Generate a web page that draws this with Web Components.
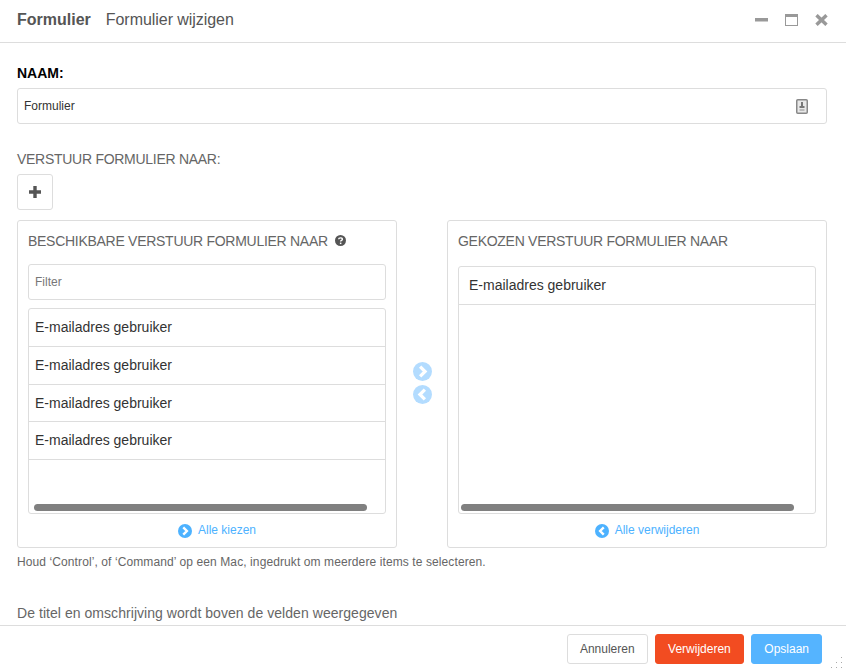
<!DOCTYPE html>
<html>
<head>
<meta charset="utf-8">
<title>Formulier</title>
<style>
  html, body { margin: 0; height: 100%; background: #fff; }
  body { font-family: "Liberation Sans", Arial, sans-serif; color: #555; }
</style>
</head>
<body>
<form-dialog>
  <span slot="title">Formulier</span>
  <span slot="subtitle">Formulier wijzigen</span>

  <name-field label="NAAM:" value="Formulier"></name-field>
  <section-label>VERSTUUR FORMULIER NAAR:</section-label>
  <add-button></add-button>

  <dual-list>
    <list-panel slot="left" heading="BESCHIKBARE VERSTUUR FORMULIER NAAR" help filter action="Alle kiezen" dir="right">
      <list-row>E-mailadres gebruiker</list-row>
      <list-row>E-mailadres gebruiker</list-row>
      <list-row>E-mailadres gebruiker</list-row>
      <list-row>E-mailadres gebruiker</list-row>
    </list-panel>
    <list-panel slot="right" heading="GEKOZEN VERSTUUR FORMULIER NAAR" action="Alle verwijderen" dir="left">
      <list-row indent>E-mailadres gebruiker</list-row>
    </list-panel>
  </dual-list>

  <hint-text>Houd ‘Control’, of ‘Command’ op een Mac, ingedrukt om meerdere items te selecteren.</hint-text>
  <note-text>De titel en omschrijving wordt boven de velden weergegeven</note-text>

  <dialog-button slot="footer">Annuleren</dialog-button>
  <dialog-button slot="footer" kind="danger">Verwijderen</dialog-button>
  <dialog-button slot="footer" kind="primary">Opslaan</dialog-button>
</form-dialog>

<script>
const circleArrow = (dir, size, color) => `
  <svg width="${size}" height="${size}" viewBox="0 0 20 20" style="display:block">
    <circle cx="10" cy="10" r="10" fill="${color}"/>
    <path d="${dir === 'right' ? 'M7.5 4.8 L12.7 10 L7.5 15.2' : 'M12.5 4.8 L7.3 10 L12.5 15.2'}" fill="none" stroke="#fff" stroke-width="3.4"/>
  </svg>`;

class FormDialog extends HTMLElement {
  constructor() {
    super();
    this.attachShadow({ mode: 'open' }).innerHTML = `
      <style>
        :host { display: flex; flex-direction: column; height: 671px; width: 846px; overflow: hidden; background: #fff; }
        header { flex: none; box-sizing: border-box; height: 43px; border-bottom: 1px solid #ddd; display: flex; align-items: center; padding: 0 18px 3px 17px; font-size: 16px; color: #555; }
        .title { font-weight: 700; margin-right: 15px; }
        .sub { letter-spacing: -0.05px; }
        .controls { margin-left: auto; display: flex; align-items: center; gap: 17px; }
        .controls svg { display: block; }
        main { flex: 1; min-height: 0; overflow: hidden; padding: 0 19px 0 17px; }
        footer { flex: none; box-sizing: border-box; height: 46px; border-top: 1px solid #ddd; display: flex; justify-content: flex-end; align-items: flex-start; gap: 7px; padding: 8px 24px 0 0; position: relative; }
        .grip { position: absolute; right: 3px; bottom: 3px; }
      </style>
      <header>
        <span class="title"><slot name="title"></slot></span>
        <span class="sub"><slot name="subtitle"></slot></span>
        <div class="controls">
          <svg width="13" height="12" viewBox="0 0 13 12"><rect x="0" y="4" width="13" height="3.5" fill="#999"/></svg>
          <svg width="13" height="12" viewBox="0 0 13 12"><rect x=".5" y=".5" width="12" height="11" fill="none" stroke="#999"/><rect x="0" y="0" width="13" height="3" fill="#999"/></svg>
          <svg width="13" height="12" viewBox="0 0 13 12"><path d="M1.5 1.2 L11.5 10.8 M11.5 1.2 L1.5 10.8" stroke="#999" stroke-width="3.4" fill="none"/></svg>
        </div>
      </header>
      <main><slot></slot></main>
      <footer>
        <slot name="footer"></slot>
        <svg class="grip" width="12" height="12" viewBox="0 0 12 12" fill="#aaa">
          <rect x="10" y="1" width="1" height="1"/><rect x="5" y="6" width="1" height="1"/><rect x="10" y="6" width="1" height="1"/>
          <rect x="0" y="11" width="1" height="1"/><rect x="5" y="11" width="1" height="1"/><rect x="10" y="11" width="1" height="1"/>
        </svg>
      </footer>`;
  }
}

class NameField extends HTMLElement {
  constructor() {
    super();
    this.attachShadow({ mode: 'open' }).innerHTML = `
      <style>
        :host { display: block; padding-top: 22px; }
        .label { font-size: 14px; line-height: 16px; font-weight: 700; color: #000; margin-bottom: 7px; }
        .box { height: 34px; border: 1px solid #ddd; border-radius: 3px; display: flex; align-items: center; padding: 0 18px 0 6px; font-size: 12px; color: #333; }
        svg { margin-left: auto; display: block; }
      </style>
      <div class="label">${this.getAttribute('label')}</div>
      <div class="box">
        <span>${this.getAttribute('value')}</span>
        <svg width="12" height="15" viewBox="0 0 12 15">
          <rect x=".75" y=".75" width="10.5" height="13.5" rx="1" fill="#e8e8e8" stroke="#888" stroke-width="1.5"/>
          <rect x="5" y="3" width="2" height="4" fill="#777"/>
          <rect x="3.5" y="7" width="5" height="2" fill="#777"/>
          <rect x="3.5" y="10" width="5" height="2" fill="#bbb"/>
        </svg>
      </div>`;
  }
}

class SectionLabel extends HTMLElement {
  constructor() {
    super();
    this.attachShadow({ mode: 'open' }).innerHTML = `
      <style>:host { display: block; font-size: 14px; line-height: 16px; letter-spacing: -0.28px; color: #666; margin-top: 27px; margin-bottom: 7px; }</style>
      <slot></slot>`;
  }
}

class AddButton extends HTMLElement {
  constructor() {
    super();
    this.attachShadow({ mode: 'open' }).innerHTML = `
      <style>
        :host { display: flex; width: 34px; height: 34px; border: 1px solid #ddd; border-radius: 3px; align-items: center; justify-content: center; margin-bottom: 10px; }
        svg { display: block; }
      </style>
      <svg width="12" height="12" viewBox="0 0 12 12"><path d="M4.3 0h3.4v4.3H12v3.4H7.7V12H4.3V7.7H0V4.3h4.3z" fill="#555"/></svg>`;
  }
}

class DualList extends HTMLElement {
  constructor() {
    super();
    this.attachShadow({ mode: 'open' }).innerHTML = `
      <style>
        :host { display: flex; height: 328px; }
        .mid { width: 50px; flex: none; display: flex; flex-direction: column; align-items: center; justify-content: center; gap: 4px; padding-bottom: 3px; box-sizing: border-box; }
      </style>
      <slot name="left"></slot>
      <div class="mid">${circleArrow('right', 19, '#b3dcff')}${circleArrow('left', 19, '#b3dcff')}</div>
      <slot name="right"></slot>`;
  }
}

class ListPanel extends HTMLElement {
  constructor() {
    super();
    const hasFilter = this.hasAttribute('filter');
    const help = this.hasAttribute('help') ? `
      <svg class="help" width="11" height="11" viewBox="0 0 11 11">
        <circle cx="5.5" cy="5.5" r="5.5" fill="#555"/>
        <path d="M3.6 4.2 C3.7 2.4 7.4 2.4 7.4 4.2 C7.4 5.4 5.6 5.3 5.6 6.6" fill="none" stroke="#fff" stroke-width="1.4"/>
        <rect x="4.9" y="7.6" width="1.5" height="1.5" fill="#fff"/>
      </svg>` : '';
    this.attachShadow({ mode: 'open' }).innerHTML = `
      <style>
        :host { display: flex; flex-direction: column; box-sizing: border-box; width: 380px; height: 328px; border: 1px solid #ddd; border-radius: 3px; padding: 0 10px; }
        .heading { flex: none; box-sizing: border-box; height: 43px; padding-bottom: 4px; display: flex; align-items: center; gap: 7px; font-size: 14px; letter-spacing: -0.28px; color: #666; }
        .help { display: block; }
        .filter { flex: none; box-sizing: border-box; height: 36px; border: 1px solid #ddd; border-radius: 3px; display: flex; align-items: center; padding: 0 6px; font-size: 12px; color: #777; margin-bottom: 8px; }
        .list { flex: 1; min-height: 0; border: 1px solid #ddd; border-radius: 3px; position: relative; overflow: hidden; ${hasFilter ? '' : 'margin-top: 2px;'} }
        .bar { position: absolute; left: ${hasFilter ? 5 : 2}px; bottom: 2px; width: 333px; height: 7px; border-radius: 4px; background: #808080; }
        .action { flex: none; box-sizing: border-box; height: 33px; padding: 0 0 2px 20px; display: flex; align-items: center; justify-content: center; gap: 6px; font-size: 12px; color: #4db2ff; }
        .action svg { margin-top: 2px; }
      </style>
      <div class="heading"><span>${this.getAttribute('heading')}</span>${help}</div>
      ${hasFilter ? '<div class="filter">Filter</div>' : ''}
      <div class="list"><slot></slot><div class="bar"></div></div>
      <div class="action">${circleArrow(this.getAttribute('dir'), 14, '#4db2ff')}<span>${this.getAttribute('action')}</span></div>`;
  }
}

class ListRow extends HTMLElement {
  constructor() {
    super();
    this.attachShadow({ mode: 'open' }).innerHTML = `
      <style>
        :host { display: flex; box-sizing: border-box; height: 38px; align-items: center; padding: 0 10px 1px 6px; border-bottom: 1px solid #ddd; font-size: 14px; color: #333; }
        :host(:nth-of-type(3)) { height: 37px; }
        :host([indent]) { padding-left: 10px; }
      </style>
      <slot></slot>`;
  }
}

class HintText extends HTMLElement {
  constructor() {
    super();
    this.attachShadow({ mode: 'open' }).innerHTML = `
      <style>:host { display: block; font-size: 12px; line-height: 14px; letter-spacing: 0.1px; color: #666; margin-top: 7px; }</style>
      <slot></slot>`;
  }
}

class NoteText extends HTMLElement {
  constructor() {
    super();
    this.attachShadow({ mode: 'open' }).innerHTML = `
      <style>:host { display: block; font-size: 14px; line-height: 16px; letter-spacing: 0.05px; color: #666; margin-top: 36px; }</style>
      <slot></slot>`;
  }
}

class DialogButton extends HTMLElement {
  constructor() {
    super();
    this.attachShadow({ mode: 'open' }).innerHTML = `
      <style>
        :host { display: flex; box-sizing: border-box; height: 30px; align-items: center; padding: 0 12px; border: 1px solid #ddd; border-radius: 3px; font-size: 12px; color: #555; background: #fff; }
        :host([kind="danger"]) { background: #f24c21; border-color: #f24c21; color: #fff; padding: 0 12.5px; }
        :host([kind="primary"]) { background: #55b4ff; border-color: #55b4ff; color: #fff; }
      </style>
      <slot></slot>`;
  }
}

customElements.define('form-dialog', FormDialog);
customElements.define('name-field', NameField);
customElements.define('section-label', SectionLabel);
customElements.define('add-button', AddButton);
customElements.define('dual-list', DualList);
customElements.define('list-panel', ListPanel);
customElements.define('list-row', ListRow);
customElements.define('hint-text', HintText);
customElements.define('note-text', NoteText);
customElements.define('dialog-button', DialogButton);
</script>
</body>
</html>
